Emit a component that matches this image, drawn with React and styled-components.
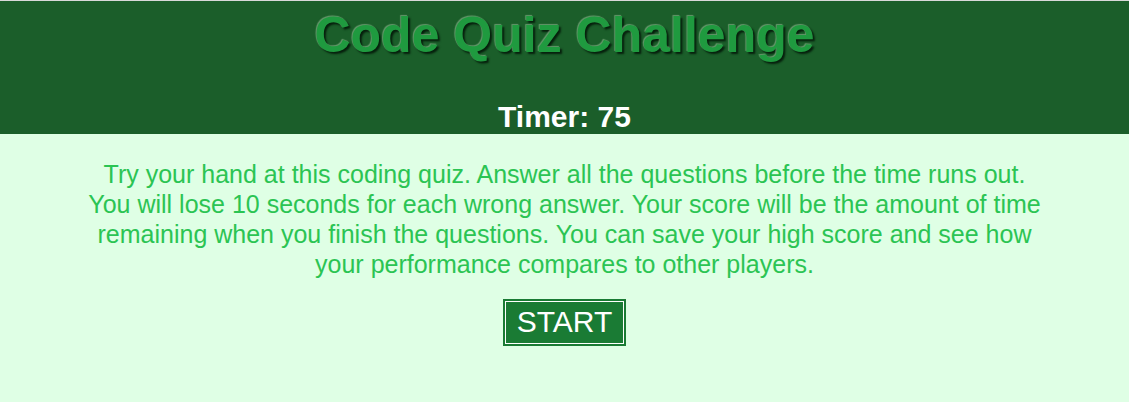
import React from "react";
import styled, { createGlobalStyle } from "styled-components";

const Global = createGlobalStyle`
  html, body {
    margin: 0;
    padding: 0;
    background: #dfffe5;
    font-family: "Liberation Sans", Arial, sans-serif;
  }
  body {
    border-top: 1px solid #d9d9d9;
    min-height: 401px;
  }
`;

const Header = styled.header`
  background: #1b5e2a;
  display: flex;
  flex-direction: column;
  align-items: center;
  padding-top: 6px;
`;

const Title = styled.h1`
  margin: 0 0 36px;
  font-size: 50px;
  line-height: 57px;
  font-weight: bold;
  color: #1f9a3f;
  text-shadow: -1px -1px 1px rgba(150, 190, 150, 0.6), 2px 2px 2px #061f0c;
`;

const Timer = styled.div`
  font-size: 30px;
  font-weight: bold;
  color: #ffffff;
`;

const Main = styled.main`
  display: flex;
  flex-direction: column;
  align-items: center;
`;

const Intro = styled.p`
  width: 85%;
  margin: 25px 0 20px;
  font-size: 25px;
  line-height: 30px;
  text-align: center;
  color: #2bc453;
`;

const StartButton = styled.button`
  font-family: "Liberation Sans", Arial, sans-serif;
  font-size: 30px;
  color: #ffffff;
  background: #1a7b34;
  border: 1px solid #ffffff;
  box-shadow: 0 0 0 2px #1a7b34;
  padding: 3px 11px 4px;
  margin-top: 2px;
  cursor: pointer;
`;

export default function App() {
  return (
    <>
      <Global />
      <Header>
        <Title>Code Quiz Challenge</Title>
        <Timer>Timer: 75</Timer>
      </Header>
      <Main>
        <Intro>
          Try your hand at this coding quiz. Answer all the questions before the
          time runs out. You will lose 10 seconds for each wrong answer. Your
          score will be the amount of time remaining when you finish the
          questions. You can save your high score and see how your performance
          compares to other players.
        </Intro>
        <StartButton>START</StartButton>
      </Main>
    </>
  );
}
